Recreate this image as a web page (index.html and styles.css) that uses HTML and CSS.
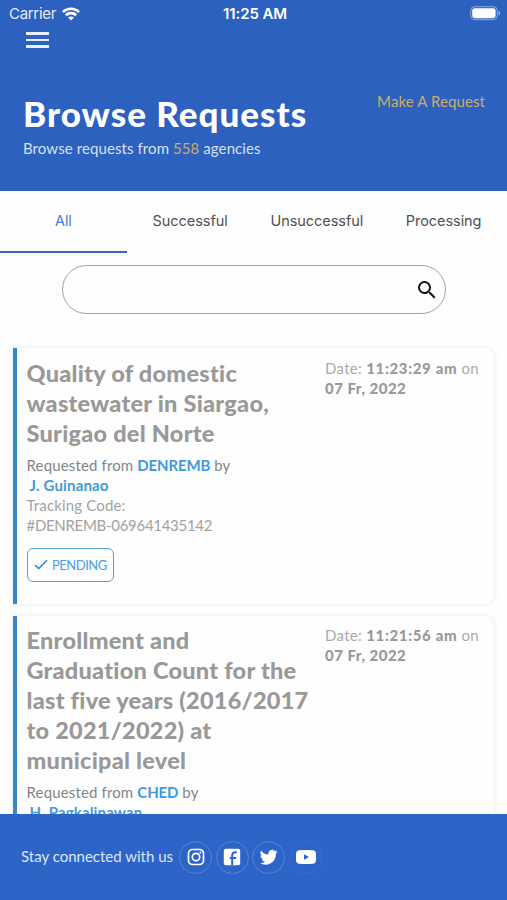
FILE: index.html
```html
<!DOCTYPE html>
<html lang="en">
<head>
    <meta charset="UTF-8">
    <title>Browse Requests</title>
    <link rel="stylesheet" href="styles.css">
</head>
<body>
    <div class="app">
        <header class="header">
            <div class="status-bar">
                <div class="carrier">
                    <span>Carrier</span>
                    <svg width="18" height="14" viewBox="0 0 18 14" fill="none" stroke="#fff" stroke-width="2.6">
                        <path d="M.9 5.1C5.4.6 12.6.6 17.1 5.1"/>
                        <path d="M3.8 8.2c2.9-2.8 7.5-2.8 10.4 0"/>
                        <path d="M9 13.6l-2.9-3c1.6-1.5 4.2-1.5 5.8 0z" fill="#fff" stroke="none"/>
                    </svg>
                </div>
                <div class="time">11:25 AM</div>
                <svg class="battery" width="31" height="15" viewBox="0 0 31 15">
                    <rect x=".7" y=".7" width="26.6" height="13" rx="4" fill="none" stroke="#fff" stroke-opacity=".45"/>
                    <rect x="2.2" y="2.2" width="23.4" height="10" rx="2.4" fill="#fff"/>
                    <path d="M28.6 4.8c2 .8 2 4 0 4.8z" fill="#fff" fill-opacity=".5"/>
                </svg>
            </div>
            <div class="menu">
                <span></span>
                <span></span>
                <span></span>
            </div>
            <div class="header-row">
                <div>
                    <h1>Browse Requests</h1>
                    <p class="subtitle">Browse requests from <span class="gold">558</span> agencies</p>
                </div>
                <a class="make-request gold">Make A Request</a>
            </div>
        </header>

        <nav class="tabs">
            <a class="tab active">All</a>
            <a class="tab">Successful</a>
            <a class="tab">Unsuccessful</a>
            <a class="tab">Processing</a>
        </nav>

        <div class="search">
            <svg width="24" height="24" viewBox="0 0 24 24" fill="#111">
                <path d="M15.5 14h-.79l-.28-.27A6.47 6.47 0 0 0 16 9.5 6.5 6.5 0 1 0 9.5 16c1.61 0 3.09-.59 4.23-1.57l.27.28v.79l5 4.99L20.49 19l-4.99-5zm-6 0a4.5 4.5 0 1 1 0-9 4.5 4.5 0 0 1 0 9z"/>
            </svg>
        </div>

        <main class="list">
            <div class="card">
                <div class="card-main">
                    <h2>Quality of domestic<br>wastewater in Siargao,<br>Surigao del Norte</h2>
                    <p class="from">Requested from <b>DENREMB</b> by</p>
                    <p class="person">J. Guinanao</p>
                    <p class="tracking">Tracking Code:</p>
                    <p class="tracking code">#DENREMB-069641435142</p>
                    <div class="status">
                        <svg width="14" height="11" viewBox="0 0 14 11" fill="none" stroke="#3190d5" stroke-width="1.6">
                            <path d="M1 6l3.6 3.6L13 1.2"/>
                        </svg>
                        <span>PENDING</span>
                    </div>
                </div>
                <div class="card-date">Date: <b>11:23:29 am</b> on<br><b class="day">07 Fr, 2022</b></div>
            </div>

            <div class="card">
                <div class="card-main">
                    <h2>Enrollment and<br>Graduation Count for the<br>last five years (2016/2017<br>to 2021/2022) at<br>municipal level</h2>
                    <p class="from">Requested from <b>CHED</b> by</p>
                    <p class="person">H. Pagkalinawan</p>
                </div>
                <div class="card-date">Date: <b>11:21:56 am</b> on<br><b class="day">07 Fr, 2022</b></div>
            </div>
        </main>

        <footer class="footer">
            <span class="stay">Stay connected with us</span>
            <a class="social">
                <svg width="18" height="18" viewBox="0 0 18 18" fill="none" stroke="#fff" stroke-width="1.7">
                    <rect x="1.5" y="1.5" width="15" height="15" rx="4"/>
                    <circle cx="9" cy="9" r="3.7"/>
                    <circle cx="13.4" cy="4.6" r="1" fill="#fff" stroke="none"/>
                </svg>
            </a>
            <a class="social">
                <svg width="18" height="18" viewBox="0 0 18 18">
                    <rect x=".8" y=".8" width="16.4" height="16.4" rx="2" fill="#fff"/>
                    <path d="M9.2 17.2V7.3c0-2 1-3.1 3.4-3.1h1.2M6.7 9.9h6.4" fill="none" stroke="#2d64c8" stroke-width="2"/>
                </svg>
            </a>
            <a class="social">
                <svg width="18" height="18" viewBox="0 0 24 24" fill="#fff">
                    <path d="M23.6 4.9a9.6 9.6 0 0 1-2.8.8 4.9 4.9 0 0 0 2.1-2.7 9.8 9.8 0 0 1-3.1 1.2 4.9 4.9 0 0 0-8.4 4.5A13.9 13.9 0 0 1 1.3 3.6a4.9 4.9 0 0 0 1.5 6.5 4.9 4.9 0 0 1-2.2-.6v.1a4.9 4.9 0 0 0 3.9 4.8 4.9 4.9 0 0 1-2.2.1 4.9 4.9 0 0 0 4.6 3.4A9.8 9.8 0 0 1-.4 19.9a13.9 13.9 0 0 0 21.5-12.4 9.9 9.9 0 0 0 2.5-2.6z"/>
                </svg>
            </a>
            <a class="social faint">
                <svg width="20" height="14" viewBox="0 0 20 14">
                    <path d="M3 .3Q10-.2 17 .3q2.7.2 2.9 2.8.2 3.9 0 7.8-.2 2.6-2.9 2.8-7 .5-14 0Q.3 13.5.1 10.9q-.2-3.9 0-7.8Q.3.5 3 .3z" fill="#fff"/>
                    <path d="M8 4.2v5.6L13 7z" fill="#2d64c8"/>
                </svg>
            </a>
        </footer>
    </div>
</body>
</html>
```
FILE: styles.css
```css
* {
    box-sizing: border-box;
}
body {
    margin: 0;
    font-family: Lato, "Liberation Sans", sans-serif;
    background: #fefefe;
}
h1, h2, p {
    margin: 0;
}
svg {
    display: block;
    flex: none;
}
.app {
    display: flex;
    flex-direction: column;
    height: 900px;
    overflow: hidden;
}

/* header */
.header {
    height: 191px;
    flex: none;
    background: #2c61c0;
    color: #fff;
}
.status-bar {
    display: grid;
    grid-template-columns: 1fr auto 1fr;
    align-items: center;
    height: 27px;
    padding: 0 6px 0 9px;
    font-family: Inter, sans-serif;
    font-size: 15px;
}
.carrier {
    display: flex;
    align-items: center;
    gap: 6px;
    letter-spacing: -0.3px;
    color: #e4ecfa;
}
.time {
    font-weight: 600;
    letter-spacing: -0.1px;
}
.battery {
    justify-self: end;
}
.menu {
    display: flex;
    flex-direction: column;
    gap: 4px;
    width: 23px;
    height: 16px;
    margin: 5px 0 0 26px;
}
.menu span {
    flex: 1;
    background: #e8effb;
}
.header-row {
    display: flex;
    justify-content: space-between;
    padding: 43px 22px 0 23px;
}
h1 {
    padding-top: 1px;
    font-size: 35px;
    font-weight: 900;
    line-height: 42px;
    letter-spacing: 1px;
    white-space: nowrap;
}
.subtitle {
    margin-top: 4px;
    font-size: 15px;
    line-height: 20px;
    color: #d5e0f5;
    letter-spacing: 0.09px;
}
.gold {
    color: #d0ab6a;
}
.make-request {
    font-size: 15px;
    line-height: 20px;
    letter-spacing: 0.1px;
    white-space: nowrap;
}

/* tabs */
.tabs {
    display: grid;
    grid-template-columns: repeat(4, 1fr);
    height: 62px;
    flex: none;
}
.tab {
    padding-top: 20px;
    font-family: Inter, sans-serif;
    font-size: 14.5px;
    line-height: 20px;
    letter-spacing: -0.05px;
    text-align: center;
    color: #505050;
}
.tab.active {
    color: #4a7ad0;
    border-bottom: 2.5px solid #3565bf;
}

/* search */
.search {
    display: flex;
    align-items: center;
    justify-content: flex-end;
    flex: none;
    width: 384px;
    height: 49px;
    margin: 12px 0 0 62px;
    padding-right: 6px;
    border: 1.5px solid #a0a4a5;
    border-radius: 25px;
}

/* request cards */
.list {
    flex: 1;
    min-height: 0;
    overflow: hidden;
    padding: 34px 13px 0;
}
.card {
    display: flex;
    height: 256px;
    margin-bottom: 11.5px;
    padding: 9.5px 0 0 9.5px;
    border-left: 4px solid #3589c6;
    border-radius: 0 10px 10px 0;
    box-shadow: 0 0 4px 1px rgba(0,0,0,0.07);
    color: #999;
}
.card-main {
    width: 298.5px;
    flex: none;
}
.card h2 {
    font-size: 23.5px;
    font-weight: 900;
    line-height: 30px;
    letter-spacing: 0.25px;
    white-space: nowrap;
    color: #999;
}
.from, .person, .tracking, .card-date {
    font-size: 15px;
    line-height: 20.3px;
    letter-spacing: 0.15px;
    white-space: nowrap;
}
.from {
    margin-top: 7px;
    color: #858585;
}
.from b, .person {
    font-weight: 700;
    color: #409bdc;
}
.from b {
    letter-spacing: -0.15px;
}
.person {
    padding-left: 3px;
}
.tracking {
    color: #a2a2a2;
}
.code {
    letter-spacing: -0.3px;
}
.status {
    display: flex;
    align-items: center;
    gap: 4px;
    width: 87px;
    height: 34px;
    margin-top: 12px;
    padding-left: 6.5px;
    border: 1.5px solid #55a2dd;
    border-radius: 6px;
    font-size: 13px;
    letter-spacing: -0.5px;
    color: #4b9edb;
}
.card-date {
    color: #aaa;
    letter-spacing: 0.3px;
}
.card-date b {
    font-weight: 900;
    letter-spacing: 0.65px;
    color: #999;
}
.card-date .day {
    letter-spacing: 0.5px;
}

/* footer */
.footer {
    display: flex;
    align-items: center;
    flex: none;
    height: 86px;
    padding-left: 21px;
    background: #2d64c8;
    color: #dbe6fa;
}
.stay {
    width: 158px;
    font-size: 15px;
    line-height: 20px;
    padding-bottom: 2px;
    white-space: nowrap;
}
.social {
    display: flex;
    align-items: center;
    justify-content: center;
    width: 33px;
    height: 33px;
    margin-right: 3.7px;
    border: 1px solid #5a82d2;
    border-radius: 50%;
}
.social.faint {
    border-color: #3a6ecb;
}
```
